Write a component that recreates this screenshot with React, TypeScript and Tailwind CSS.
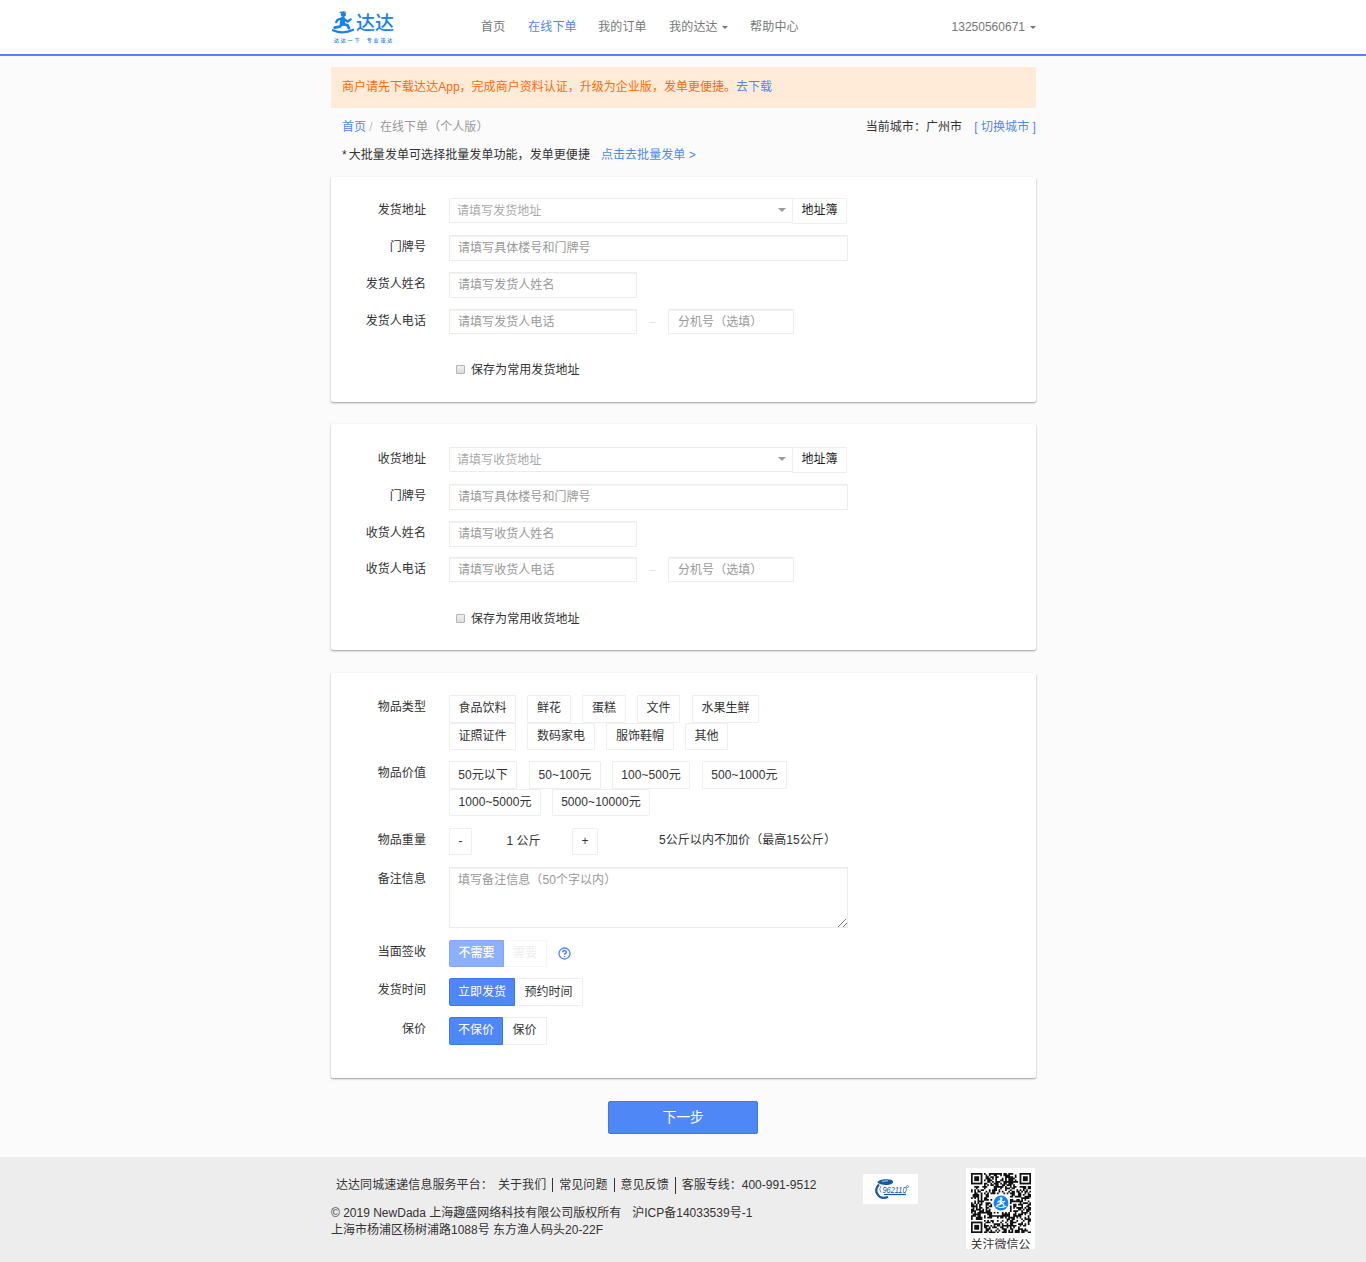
import type { ReactNode } from "react";

function Caret({ className = "" }: { className?: string }) {
  return (
    <svg className={className} width="6" height="3" viewBox="0 0 6 3">
      <path d="M0 0H6L3 3Z" fill="currentColor" />
    </svg>
  );
}

function Row({ label, className = "", children }: { label: string; className?: string; children: ReactNode }) {
  return (
    <div className={`flex items-start ${className}`}>
      <div className="mr-[23px] w-[95px] shrink-0 text-right leading-6">{label}</div>
      {children}
    </div>
  );
}

function Input({ text, className = "" }: { text: string; className?: string }) {
  return (
    <div
      className={`rounded-[1px] border border-[#ececec] bg-white pl-[8px] leading-6 text-[#999] shadow-[inset_0_1px_0_#f4f4f4] ${className}`}
    >
      {text}
    </div>
  );
}

function Chip({ text, className = "leading-6" }: { text: string; className?: string }) {
  return (
    <button className={`shrink-0 rounded-[1px] border border-[#efefef] bg-white text-center whitespace-nowrap ${className}`}>
      {text}
    </button>
  );
}

function AddressCard({ who, className, rows }: { who: string; className: string; rows: string[] }) {
  return (
    <section className={`w-[705px] rounded-[2px] bg-white shadow-[0_1px_2px_rgba(0,0,0,0.38)] ${className}`}>
      <Row label={`${who}货地址`} className={rows[0]}>
        <div className="flex h-[25px] w-[344px] items-start justify-between rounded-l-[1px] border border-[#ececec] pr-[6px] pl-[7px] text-[#aaa]">
          <span className="leading-6">请填写{who}货地址</span>
          <svg className="mt-[9px]" width="8" height="4" viewBox="0 0 8 4">
            <path d="M0 0H8L4 4Z" fill="#999" />
          </svg>
        </div>
        <div className="-ml-px h-[26px] w-[55px] rounded-[1px] border border-[#efefef] text-center leading-[22px] text-[#222]">
          地址簿
        </div>
      </Row>
      <Row label="门牌号" className={rows[1]}>
        <Input text="请填写具体楼号和门牌号" className="h-[26px] w-[399px]" />
      </Row>
      <Row label={`${who}货人姓名`} className={rows[2]}>
        <Input text={`请填写${who}货人姓名`} className="h-[26px] w-[188px]" />
      </Row>
      <Row label={`${who}货人电话`} className={rows[3]}>
        <Input text={`请填写${who}货人电话`} className="h-[25px] w-[188px]" />
        <div className="mx-3 mt-[13px] h-px w-[7px] bg-[#e6e6e6]" />
        <Input text="分机号（选填）" className="h-[25px] w-[126px] !pl-[9px]" />
      </Row>
      <label className={`ml-[125px] flex items-start leading-6 ${rows[4]}`}>
        <span className="mt-[7px] mr-[6px] h-[9px] w-[9px] rounded-[1px] border border-[#b4b4b4] bg-linear-to-b from-[#efefef] to-[#dcdcdc]" />
        <span>保存为常用{who}货地址</span>
      </label>
    </section>
  );
}

function Runner({ light = false }: { light?: boolean }) {
  const c = light ? "#fff" : "#1482f0";
  return (
    <g fill="none" stroke={c} strokeLinecap="round" strokeLinejoin="round">
      <circle cx="10.8" cy="3.2" r="2.5" fill={c} stroke="none" />
      <path d="M7.8 1.4L12 .8" strokeWidth="1.2" />
      {!light && <path d="M12.4 .9L13.4 1.8" stroke="#f5a623" strokeWidth="1.3" />}
      <path d="M10.4 8L9.8 12" strokeWidth="4.8" />
      <path d="M9 7.2L5.3 8.4L4 10.6M12 8L14.8 10L17.8 8" strokeWidth="2.2" />
      <path d="M9.5 12.5L7.4 15L2.6 16M11 12.5L14.6 13.4L16.2 16.4" strokeWidth="2.7" />
      <path d="M.8 18.3Q10.5 22.6 20.2 18" strokeWidth="2.1" />
    </g>
  );
}

const QR = 37;

function qrPath() {
  let seed = 20197;
  let d = "";
  const inBox = (x: number, y: number, bx: number, by: number, s: number) =>
    x >= bx && x < bx + s && y >= by && y < by + s;
  for (let y = 0; y < QR; y++) {
    for (let x = 0; x < QR; x++) {
      seed = (seed * 1103515245 + 12345) % 2147483648;
      const finder = inBox(x, y, 0, 0, 8) || inBox(x, y, QR - 8, 0, 8) || inBox(x, y, 0, QR - 8, 8);
      if (finder || inBox(x, y, 13, 13, 11)) continue;
      if (seed / 2147483648 < 0.52) d += `M${x} ${y}h1.05v1.05h-1.05z`;
    }
  }
  return d;
}

function QrCode() {
  return (
    <svg width="60" height="60" viewBox="0 0 37 37" className="shrink-0">
      <rect width="37" height="37" fill="#fff" />
      <path d={qrPath()} fill="#111" />
      {[
        [0, 0],
        [30, 0],
        [0, 30],
      ].map(([x, y]) => (
        <g key={`${x}-${y}`}>
          <rect x={x + 0.5} y={y + 0.5} width="6" height="6" fill="#fff" stroke="#111" strokeWidth="1.1" />
          <rect x={x + 2} y={y + 2} width="3" height="3" fill="#111" />
        </g>
      ))}
      <circle cx="18.5" cy="18.5" r="4.6" fill="#1482f0" />
      <g transform="translate(15.3 14.9) scale(.31)">
        <Runner light />
      </g>
    </svg>
  );
}

function Badge() {
  return (
    <svg width="54" height="29" viewBox="0 0 54 29">
      <path d="M14.500 9Q15 6 21 5.300Q29 4.600 30 7.500Q30.500 9.500 27 10.500Q20 12 14.500 9Z" fill="#1b57a0" />
      <path d="M19 7.300L25 6.800" stroke="#b8cde6" strokeWidth="1" />
      <path d="M16 10.500Q11 16 15 21Q18 25.500 25 23" fill="none" stroke="#1b57a0" strokeWidth="2.200" />
      <path d="M18 12Q15.500 15 18 18.500" fill="none" stroke="#6b95c8" strokeWidth="1" />
      <path d="M21 20.500H43" stroke="#1b57a0" strokeWidth="1.300" />
      <circle cx="44.500" cy="12.500" r="1" fill="none" stroke="#1b57a0" strokeWidth=".6" />
      <text x="19.500" y="18.700" fontSize="9" fontStyle="italic" letterSpacing="0" fontFamily="Liberation Sans" fill="#1b57a0" textLength="24" lengthAdjust="spacingAndGlyphs">
        962110
      </text>
    </svg>
  );
}

export default function App() {
  return (
    <div className="flex h-[1262px] flex-col bg-[#fbfbfb] font-['Liberation_Sans','Noto_Sans_CJK_SC',sans-serif] text-[12px] tracking-[0.06px] text-[#333]">
      <header className="h-14 shrink-0 border-b-2 border-[#4f87f7] bg-white">
        <div className="mx-auto flex w-[706px] items-start pl-[2px] text-[#777]">
          <div className="mt-[11px] h-[34px] w-[64px] text-[#1482f0]">
            <div className="flex h-[24px]">
              <svg width="22" height="23" viewBox="0 0 21 22">
                <Runner />
              </svg>
              <span className="ml-[2px] pt-px text-[19px] leading-[24px] font-medium tracking-[0]">达达</span>
            </div>
            <div className="flex h-[10px] w-[62px] justify-between pl-[2px] text-[5px] leading-[10px] font-medium tracking-[1.8px] whitespace-nowrap">
              <span>达达一下</span>
              <span>专业速达</span>
            </div>
          </div>
          <nav className="ml-[85px] flex pt-[15px] leading-6 tracking-[0.2px] whitespace-nowrap">
            <a className="w-[47px]">首页</a>
            <a className="w-[70px] text-[#4f87f7]">在线下单</a>
            <a className="w-[71px]">我的订单</a>
            <a className="flex w-[81px] items-center">
              我的达达
              <Caret className="ml-1" />
            </a>
            <a className="w-[60px]">帮助中心</a>
          </nav>
          <div className="ml-auto flex items-center pt-[15px] leading-6 tracking-[0]">
            13250560671
            <Caret className="ml-[5px]" />
          </div>
        </div>
      </header>

      <main className="mx-auto w-[706px] grow pl-px">
        <div className="mt-[11px] h-[41px] rounded-[1px] bg-[#ffebd7] pl-[11px] leading-10 tracking-[0.02px] text-[#ff6a0a]">
          商户请先下载达达App，完成商户资料认证，升级为企业版，发单更便捷。<a className="text-[#4f87f7]">去下载</a>
        </div>
        <div className="mt-[7px] flex h-6 pl-[11px] leading-6">
          <a className="text-[#4f87f7]">首页</a>
          <span className="mr-[4px] ml-[3px] text-[#bbb]">/</span>
          <span className="text-[#999]">&nbsp;在线下单（个人版）</span>
          <span className="ml-auto">当前城市：广州市</span>
          <a className="ml-3 text-[#4f87f7]">[ 切换城市 ]</a>
        </div>
        <div className="mt-1 flex h-6 pl-[11px] leading-6">
          <span className="mr-[2px]">*</span>大批量发单可选择批量发单功能，发单更便捷
          <a className="ml-[11px] text-[#4f87f7]">点击去批量发单 &gt;</a>
        </div>

        <AddressCard
          who="发"
          className="mt-[10px] h-[225px]"
          rows={["pt-[21px] h-[58px]", "h-[37px]", "h-[37px]", "h-[37px]", "mt-[12px]"]}
        />
        <AddressCard
          who="收"
          className="mt-[22px] h-[226px]"
          rows={["pt-[23px] h-[60px]", "h-[37px]", "h-[36px]", "h-[37px]", "mt-[13px]"]}
        />

        <section className="mt-[23px] h-[405px] rounded-[2px] bg-white pt-[22px] shadow-[0_1px_2px_rgba(0,0,0,0.38)]">
          <Row label="物品类型" className="h-[66px]">
            <div>
              <div className="flex">
                <Chip text="食品饮料" className="mr-[11px] h-7 w-[67px] pb-[2px] leading-6" />
                <Chip text="鲜花" className="mr-[11px] h-7 w-[44px] pb-[2px] leading-6" />
                <Chip text="蛋糕" className="mr-[11px] h-7 w-[44px] pb-[2px] leading-6" />
                <Chip text="文件" className="mr-[12px] h-7 w-[43px] pb-[2px] leading-6" />
                <Chip text="水果生鲜" className="h-7 w-[67px] pb-[2px] leading-6" />
              </div>
              <div className="flex">
                <Chip text="证照证件" className="mr-[11px] h-[27px] w-[67px] pb-px leading-6" />
                <Chip text="数码家电" className="mr-[11px] h-[27px] w-[68px] pb-px leading-6" />
                <Chip text="服饰鞋帽" className="mr-[11px] h-[27px] w-[68px] pb-px leading-6" />
                <Chip text="其他" className="h-[27px] w-[43px] pb-px leading-6" />
              </div>
            </div>
          </Row>
          <Row label="物品价值" className="h-[67px]">
            <div>
              <div className="flex">
                <Chip text="50元以下" className="mr-[12px] h-7 w-[68px] leading-6" />
                <Chip text="50~100元" className="mr-[11px] h-7 w-[72px] leading-6" />
                <Chip text="100~500元" className="mr-[12px] h-7 w-[78px] leading-6" />
                <Chip text="500~1000元" className="h-7 w-[85px] leading-6" />
              </div>
              <div className="flex">
                <Chip text="1000~5000元" className="mr-[11px] h-[27px] w-[92px] pb-px leading-6" />
                <Chip text="5000~10000元" className="h-[27px] w-[98px] pb-px leading-6" />
              </div>
            </div>
          </Row>
          <Row label="物品重量" className="h-[39px]">
            <Chip text="-" className="h-[27px] w-[23px] pb-px leading-6" />
            <span className="w-[100px] pl-[3px] text-center leading-[26px]">1 公斤</span>
            <Chip text="+" className="h-[27px] w-[26px] pb-px leading-6" />
            <span className="ml-[61px] leading-6">5公斤以内不加价（最高15公斤）</span>
          </Row>
          <Row label="备注信息" className="h-[73px]">
            <div className="flex h-[61px] w-[399px] items-end justify-between border border-[#ececec] pl-[8px] text-[#999] shadow-[inset_0_1px_0_#f4f4f4]">
              <span className="self-start leading-6">填写备注信息（50个字以内）</span>
              <svg width="9" height="9" viewBox="0 0 9 9" stroke="#777" strokeWidth="1">
                <path d="M0 9L8 1M5 9L9 5" />
              </svg>
            </div>
          </Row>
          <Row label="当面签收" className="h-[38px]">
            <button className="h-[27px] w-[55px] rounded-l-[2px] border border-[#80a6f6] bg-[#8cb0fb] pb-px leading-6 font-medium text-white">
              不需要
            </button>
            <button className="h-[27px] w-[43px] border border-l-0 border-[#f5f5f5] pb-px leading-6 text-[#efefef]">需要</button>
            <svg className="mt-[7px] ml-[11px]" width="13" height="13" viewBox="0 0 13 13" fill="none" stroke="#4f87f7">
              <circle cx="6.500" cy="6.500" r="5.500" strokeWidth="1.300" />
              <path d="M4.600 5.200Q4.700 3.500 6.500 3.500Q8.400 3.600 8.400 5.100Q8.300 6.100 7.200 6.600Q6.500 7 6.500 8M6.500 8.900V10.100" strokeWidth="1.500" />
            </svg>
          </Row>
          <Row label="发货时间" className="h-[39px]">
            <button className="h-7 w-[66px] rounded-l-[2px] border border-[#3b78f0] bg-[#4f87f7] leading-[26px] text-white">立即发货</button>
            <button className="h-7 w-[68px] border border-l-0 border-[#efefef] leading-[26px]">预约时间</button>
          </Row>
          <Row label="保价">
            <button className="h-7 w-[54px] rounded-l-[2px] border border-[#3b78f0] bg-[#4f87f7] pb-[2px] leading-[24px] text-white">不保价</button>
            <button className="h-7 w-[44px] border border-l-0 border-[#efefef] pb-[2px] leading-[24px]">保价</button>
          </Row>
        </section>

        <button className="mt-[23px] ml-[277px] block h-[33px] w-[150px] rounded-[2px] border border-[#3b78f0] bg-[#4f87f7] text-[14px] leading-[31px] tracking-[-0.3px] text-white">
          下一步
        </button>
      </main>

      <footer className="h-[105px] shrink-0 bg-[#ededed]">
        <div className="mx-auto flex w-[706px] items-start pr-px pl-px">
          <div className="w-[532px] pt-4 whitespace-nowrap">
            <div className="flex h-6 items-center pl-[5px] leading-6">
              <span className="w-[162px]">达达同城速递信息服务平台：</span>
              <a>关于我们</a>
              <i className="mx-[6px] h-[14px] w-px bg-[#333]" />
              <a>常见问题</a>
              <i className="mx-[6px] h-[14px] w-px bg-[#333]" />
              <a>意见反馈</a>
              <i className="mx-[6px] h-[17px] w-px bg-[#333]" />
              <span className="tracking-[0]">客服专线：400-991-9512</span>
            </div>
            <div className="mt-2 leading-[17px] tracking-[0]">
              <div>
                © 2019 NewDada 上海趣盛网络科技有限公司版权所有<span className="ml-[11px]">沪ICP备14033539号-1</span>
              </div>
              <div>上海市杨浦区杨树浦路1088号 东方渔人码头20-22F</div>
            </div>
          </div>
          <div className="mt-[17px] h-[30px] w-[55px] bg-white">
            <Badge />
          </div>
          <div className="mt-[11px] ml-auto flex h-[81px] w-[69px] flex-col items-center overflow-hidden bg-white pt-[5px]">
            <QrCode />
            <div className="mt-[3px] h-[13px] w-[60px] shrink-0 overflow-hidden leading-[18px] tracking-[0] whitespace-nowrap">关注微信公</div>
          </div>
        </div>
      </footer>
    </div>
  );
}
